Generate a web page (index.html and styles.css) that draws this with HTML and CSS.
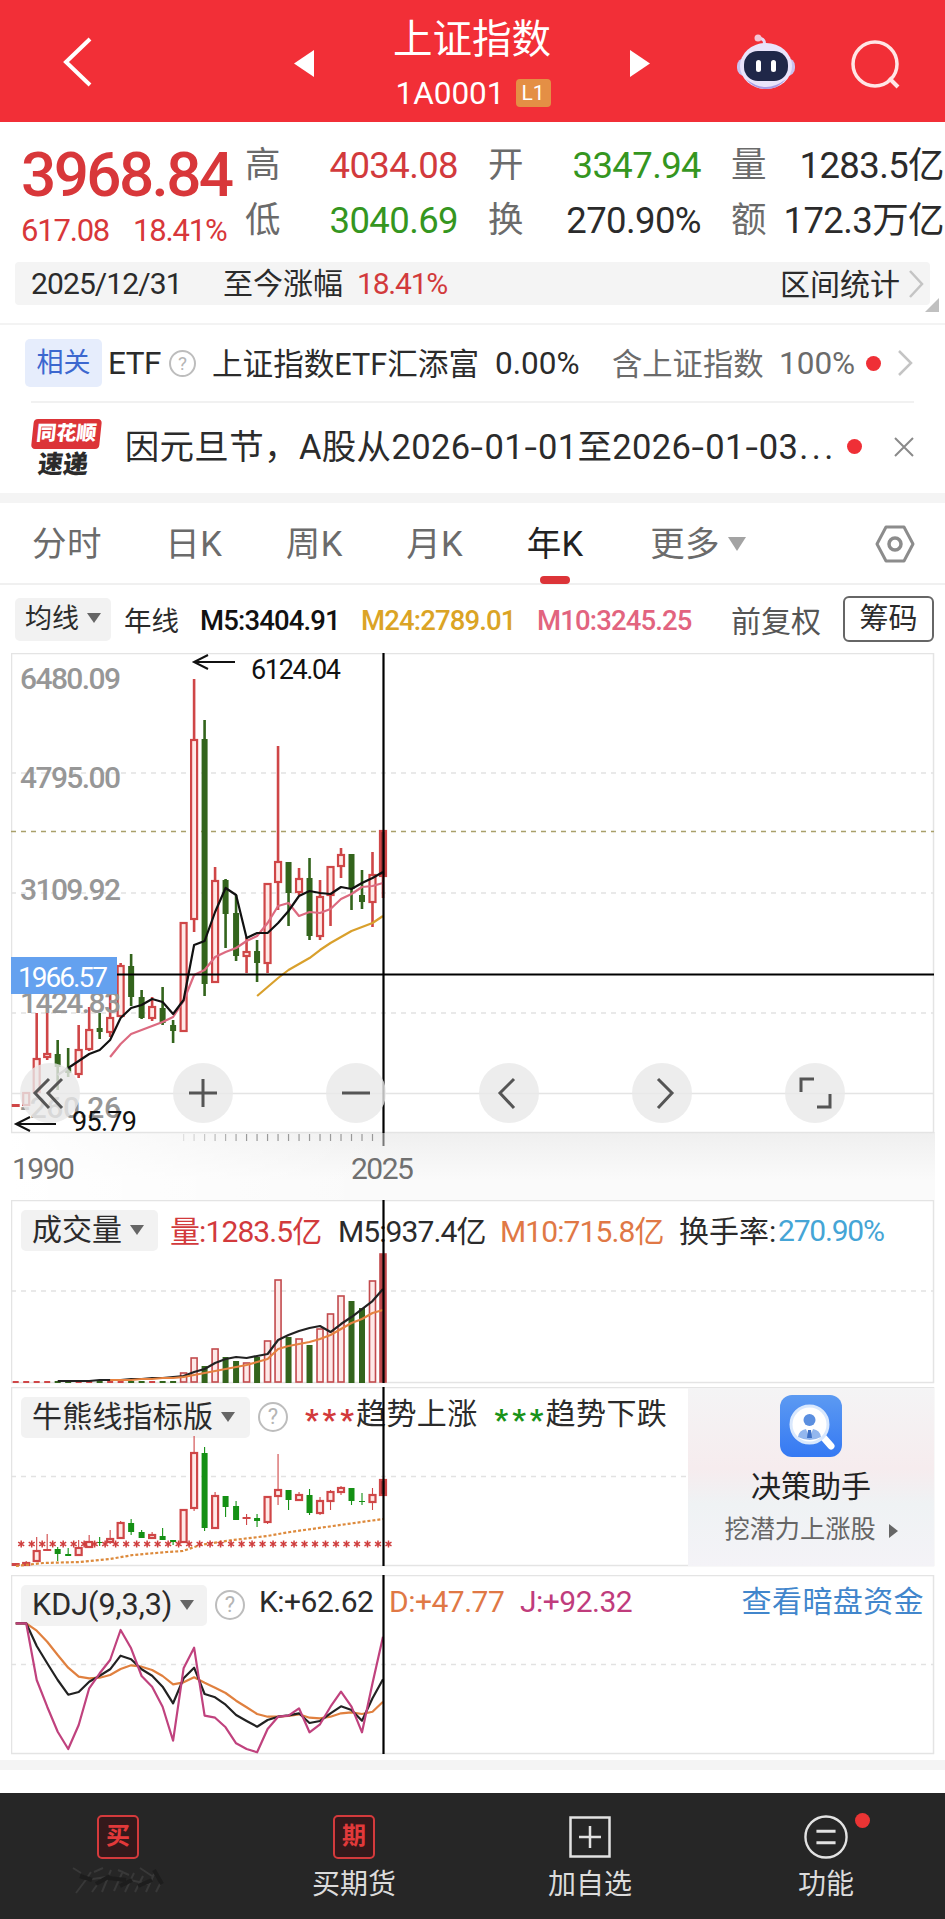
FILE: index.html
```html
<!DOCTYPE html>
<html lang="zh-CN">
<head>
  <meta charset="UTF-8">
  <meta name="viewport" content="width=device-width, initial-scale=1.0">
  <title>上证指数</title>
  <link rel="stylesheet" href="styles.css">
</head>
<body>
  <!-- Top bar -->
  <header class="topbar">
    <svg class="back" width="34" height="54" viewBox="0 0 34 54"><path d="M30 4 6 27 30 50" fill="none" stroke="#fff" stroke-width="4"/></svg>
    <svg class="prev" width="20" height="30" viewBox="0 0 20 30"><path d="M20 1v27L0 14.500z" fill="#fff"/></svg>
    <div class="title">
      <h1>上证指数</h1>
      <div class="code">1A0001<span class="level">L1</span></div>
    </div>
    <svg class="next" width="20" height="30" viewBox="0 0 20 30"><path d="M0 1v27l20-13.500z" fill="#fff"/></svg>
    <svg class="robot" width="60" height="56" viewBox="0 0 60 56">
      <path d="M28 12q2-7-5-8" fill="none" stroke="#e6d9f5" stroke-width="3"/>
      <circle cx="22" cy="4" r="3.500" fill="#f3c6d6"/>
      <rect x="1" y="24" width="58" height="18" rx="8" fill="#c9c3ef"/>
      <ellipse cx="30" cy="32" rx="26" ry="23" fill="#e9e4fb"/>
      <path d="M10 45q20 16 40 0-8 10-20 10T10 45z" fill="#a99be4"/>
      <rect x="8" y="17" width="44" height="30" rx="14" fill="#1f2748"/>
      <rect x="20" y="26" width="5" height="12" rx="2.500" fill="#fff"/>
      <rect x="35" y="26" width="5" height="12" rx="2.500" fill="#fff"/>
    </svg>
    <svg class="search" width="52" height="52" viewBox="0 0 52 52"><circle cx="25" cy="25" r="22" fill="none" stroke="#ffe6e6" stroke-width="3.500"/><path d="m39 39 9 9" stroke="#ffe6e6" stroke-width="4"/></svg>
  </header>

  <!-- Quote -->
  <section class="quote">
    <div class="price">
      <div class="last">3968.84</div>
      <div class="change"><span>617.08</span><span>18.41%</span></div>
    </div>
    <dl class="stats">
      <div><dt>高</dt><dd class="up">4034.08</dd></div>
      <div><dt>开</dt><dd class="down">3347.94</dd></div>
      <div><dt>量</dt><dd>1283.5亿</dd></div>
      <div><dt>低</dt><dd class="down">3040.69</dd></div>
      <div><dt>换</dt><dd>270.90%</dd></div>
      <div><dt>额</dt><dd>172.3万亿</dd></div>
    </dl>
  </section>
  <div class="range">
    <span class="date">2025/12/31</span>
    <span class="since">至今涨幅</span>
    <span class="up">18.41%</span>
    <span class="range-link">区间统计</span>
    <svg width="16" height="30" viewBox="0 0 16 30"><path d="m2 2 12 13L2 28" fill="none" stroke="#c4c4c4" stroke-width="2.500"/></svg>
    <i class="corner"></i>
  </div>

  <!-- Related ETF -->
  <section class="related">
    <span class="tag">相关</span>
    <span class="etf">ETF</span>
    <span class="help small">?</span>
    <span class="fund">上证指数ETF汇添富</span>
    <span class="fund-rate">0.00%</span>
    <span class="contain">含上证指数</span>
    <span class="contain-rate">100%</span>
    <i class="dot"></i>
    <svg width="16" height="28" viewBox="0 0 16 28"><path d="m2 2 12 12L2 26" fill="none" stroke="#c4c4c4" stroke-width="2.500"/></svg>
  </section>
  <section class="news">
    <div class="brand"><b>同花顺</b><em>速递</em></div>
    <p>因元旦节，A股从2026<s>-</s>01<s>-</s>01至2026<s>-</s>01<s>-</s>03<u>...</u></p>
    <i class="dot"></i>
    <svg width="20" height="20" viewBox="0 0 20 20"><path d="m1 1 18 18M19 1 1 19" stroke="#8a8a8a" stroke-width="2"/></svg>
  </section>

  <!-- Period tabs -->
  <nav class="tabs">
    <a>分时</a>
    <a>日K</a>
    <a>周K</a>
    <a>月K</a>
    <a class="active">年K</a>
    <a class="more">更多<i class="caret"></i></a>
    <svg width="40" height="38" viewBox="0 0 40 38"><path d="M11 2h18l9 17-9 17H11L2 19z" fill="none" stroke="#8c8c8c" stroke-width="3" stroke-linejoin="round"/><circle cx="20" cy="19" r="6" fill="none" stroke="#8c8c8c" stroke-width="3.500"/></svg>
  </nav>

  <div class="ma-row">
    <button class="pick">均线<i class="caret"></i></button>
    <span class="ma-name">年线</span>
    <span class="m5">M5:3404.91</span>
    <span class="m24">M24:2789.01</span>
    <span class="m10">M10:3245.25</span>
    <span class="fq">前复权</span>
    <button class="chips">筹码</button>
  </div>

  <!-- Candle chart -->
  <section class="panel main-panel">
    <svg id="mainChart" viewBox="11 653 924 494"></svg>
    <div class="tools">
      <button><svg viewBox="0 0 60 60"><path d="M29 16 15 30l14 15M42 16 28 30l14 15"/></svg></button>
      <button><svg viewBox="0 0 60 60"><path d="M16 30h28M30 16v28"/></svg></button>
      <button><svg viewBox="0 0 60 60"><path d="M16 30h28"/></svg></button>
      <button><svg viewBox="0 0 60 60"><path d="M35 16 21 30l14 15"/></svg></button>
      <button><svg viewBox="0 0 60 60"><path d="M26 16 40 30 26 45"/></svg></button>
      <button><svg viewBox="0 0 60 60"><path d="M16 29V16h13M45 31v13H32"/></svg></button>
    </div>
  </section>
  <div class="years"><span>1990</span><span>2025</span></div>

  <!-- Volume -->
  <section class="panel vol-panel">
    <div class="legend">
      <button class="pick">成交量<i class="caret"></i></button>
      <span class="up v1">量:1283.5亿</span>
      <span class="v2">M5:937.4亿</span>
      <span class="orange v3">M10:715.8亿</span>
      <span class="v4">换手率:</span>
      <span class="blue v5">270.90%</span>
    </div>
    <svg id="volChart" viewBox="11 1200 924 184"></svg>
  </section>

  <!-- Bull / bear line -->
  <section class="panel bull-panel">
    <div class="legend">
      <button class="pick">牛熊线指标版<i class="caret"></i></button>
      <span class="help">?</span>
      <span class="stars up">***</span>
      <span class="b1">趋势上涨</span>
      <span class="stars green">***</span>
      <span class="b2">趋势下跌</span>
    </div>
    <svg id="bullChart" viewBox="11 1387 924 180"></svg>
    <aside class="helper">
      <svg width="62" height="62" viewBox="0 0 62 62">
        <defs><linearGradient id="hg" x1="0" y1="0" x2="0" y2="1"><stop offset="0" stop-color="#5c9af2"/><stop offset="1" stop-color="#3579f3"/></linearGradient></defs>
        <rect width="62" height="62" rx="12" fill="url(#hg)"/>
        <path d="m44 43 7 8" stroke="#fff" stroke-width="7" stroke-linecap="round"/>
        <circle cx="29.500" cy="29.500" r="18.500" fill="#fff" stroke="#d9e8fd" stroke-width="3"/>
        <circle cx="29.500" cy="25" r="6" fill="#5b8fe0"/>
        <path d="M18 42q1-7 8-8l3.500 9 3.500-9q7 1 8 8-11 6-23 0z" fill="#93b7ee"/>
        <path d="M28 35h3l1 8h-5z" fill="#3d6fc4"/>
      </svg>
      <strong>决策助手</strong>
      <small>挖潜力上涨股<i></i></small>
    </aside>
  </section>

  <!-- KDJ -->
  <section class="panel kdj-panel">
    <div class="legend">
      <button class="pick">KDJ(9,3,3)<i class="caret"></i></button>
      <span class="help">?</span>
      <span class="k1">K:+62.62</span>
      <span class="orange k2">D:+47.77</span>
      <span class="magenta k3">J:+92.32</span>
      <a class="dark-pool">查看暗盘资金</a>
    </div>
    <svg id="kdjChart" viewBox="11 1575 924 180"></svg>
  </section>

  <!-- Bottom bar -->
  <footer class="bottom">
    <div class="item">
      <span class="box">买</span>
      <svg class="smudge" width="92" height="32" viewBox="0 0 92 32"><path d="M1 4 9 9M4 29l9-12 6-9M22 8l9-4M20 28l10-14M30 28l9-22M42 27l9-20M46 6l11 5M53 28l9-19M63 28l8-16M68 4l12 8M74 28l8-18M84 28l5-10M14 16l20-3M58 16l18 4"/><path class="dim" d="M8 12l12 4M24 20l14-8M36 14l18 2M48 22l12-6M66 22l14-6M82 6l8 14"/></svg>
    </div>
    <div class="item">
      <span class="box">期</span>
      <span>买期货</span>
    </div>
    <div class="item">
      <svg width="44" height="44" viewBox="0 0 44 44"><path d="M2.500 2.500h39v39h-39zM11 22h22M22 11v22" fill="none" stroke="#e2e2e2" stroke-width="2.500"/></svg>
      <span>加自选</span>
    </div>
    <div class="item">
      <svg width="46" height="46" viewBox="0 0 46 46"><path d="M13 17h20M13 29h20" stroke="#e2e2e2" stroke-width="3"/><circle cx="23" cy="23" r="21.500" fill="none" stroke="#e2e2e2" stroke-width="2.500"/></svg>
      <i class="badge"></i>
      <span>功能</span>
    </div>
  </footer>

  <script src="script.js"></script>
</body>
</html>
```

FILE: styles.css
```css
* {
  margin: 0;
  padding: 0;
  box-sizing: border-box;
}

body {
  width: 945px;
  height: 1919px;
  overflow: hidden;
  background: #fff;
  color: #2b2b2b;
  font-family: Roboto, "Noto Sans CJK SC", sans-serif;
  font-size: 30px;
  white-space: nowrap;
}

svg {
  display: block;
  flex: none;
}

i, em {
  font-style: normal;
}

button {
  border: none;
  color: inherit;
  font: inherit;
}

span, a, button {
  flex: none;
}

.up { color: #d23a3c; }
.down { color: #35961f; }
.green { color: #1a931a; }
.orange { color: #e07845; }
.blue { color: #45a5d6; }
.magenta { color: #c03c7c; }

/* Top bar */
.topbar {
  display: flex;
  align-items: center;
  height: 122px;
  background: #f22f37;
  color: #fff;
}

.back {
  margin-left: 60px;
  margin-top: 2px;
}

.prev {
  margin-left: 200px;
  margin-top: 6px;
}

.title {
  width: 316px;
  text-align: center;
}

.title h1 {
  height: 68px;
  line-height: 66px;
  margin-top: -4px;
  font-size: 39.500px;
  font-weight: 400;
}

.code {
  display: flex;
  justify-content: center;
  align-items: center;
  height: 36px;
  padding-left: 2px;
  font-size: 31.500px;
}

.level {
  width: 35px;
  height: 28px;
  margin-left: 11px;
  border-radius: 4px;
  background: #e48f45;
  font-size: 21px;
  line-height: 28px;
}

.next {
  margin-top: 6px;
}

.robot {
  margin-left: 86px;
  margin-top: 2px;
}

.search {
  margin-left: 54px;
  margin-top: 8px;
}

/* Quote */
.quote {
  display: flex;
  height: 140px;
  padding: 18px 2px 0 21px;
}

.price {
  width: 226px;
  color: #d8373a;
}

.last {
  height: 69px;
  font-size: 62px;
  font-weight: 500;
  line-height: 70px;
  letter-spacing: -2.600px;
}

.change {
  display: flex;
  gap: 24px;
  height: 44px;
  font-size: 31px;
  line-height: 43px;
  letter-spacing: -1.200px;
}

.stats {
  display: grid;
  grid-template-columns: repeat(3, 212px);
  grid-auto-rows: 55px;
  column-gap: 31px;
}

.stats div {
  display: flex;
  justify-content: space-between;
  line-height: 51px;
}

.stats dt {
  color: #6b6b6b;
  font-size: 35.500px;
}

.stats dd {
  font-size: 36.500px;
  letter-spacing: -0.600px;
  margin-right: -1px;
}

.range {
  position: relative;
  display: flex;
  align-items: center;
  width: 915px;
  height: 43px;
  margin-left: 15px;
  padding: 0 6px 0 16px;
  border-radius: 4px;
  background: #f4f4f4;
  line-height: 43px;
}

.date {
  width: 192px;
  letter-spacing: -0.900px;
}

.since {
  width: 134px;
}

.range .up {
  letter-spacing: -1.200px;
}

.range-link {
  margin-left: auto;
  margin-right: 8px;
  padding-top: 2px;
}

.corner {
  position: absolute;
  right: -9px;
  bottom: -7px;
  border: 7px solid #c0c0c0;
  border-top-color: transparent;
  border-left-color: transparent;
}

/* Related ETF */
.related {
  display: flex;
  align-items: center;
  height: 78px;
  margin-top: 18px;
  padding-left: 25px;
  border-top: 2px solid #f3f3f3;
}

.tag {
  width: 77px;
  height: 48px;
  border-radius: 5px;
  background: #e6edfc;
  color: #3c67cf;
  font-size: 27px;
  line-height: 48px;
  text-align: center;
}

.etf {
  width: 61px;
  padding-left: 6px;
  font-size: 31.500px;
  letter-spacing: -0.500px;
}

.help {
  width: 30px;
  height: 30px;
  border: 2.500px solid #bdbdbd;
  border-radius: 50%;
  color: #b5b5b5;
  font-size: 22px;
  line-height: 26px;
  text-align: center;
}

.help.small {
  width: 27px;
  height: 27px;
  margin-left: 6px;
  border-width: 2px;
  font-size: 19px;
  line-height: 23px;
}

.fund {
  width: 283px;
  margin-left: 16px;
  font-size: 30.600px;
}

.fund-rate {
  width: 117px;
  font-size: 31.500px;
}

.fund, .contain {
  margin-top: -3px;
}

.contain {
  width: 167px;
  color: #6b6b6b;
  font-size: 30.300px;
}

.contain-rate {
  width: 87px;
  color: #6b6b6b;
  font-size: 31.500px;
}

.dot {
  width: 15px;
  height: 15px;
  border-radius: 50%;
  background: #ef2f36;
}

.related svg {
  margin-left: 16px;
}

.news {
  display: flex;
  align-items: center;
  height: 92px;
  margin: 0 31px;
  border-top: 2px solid #f1f1f1;
}

.brand {
  display: flex;
  flex-direction: column;
  width: 94px;
  transform: skewX(-6deg);
}

.brand b {
  width: 68px;
  height: 30px;
  border-radius: 4px;
  background: #dc3438;
  color: #fff;
  font-size: 20px;
  font-weight: 900;
  line-height: 29px;
  text-align: center;
}

.brand em {
  width: 68px;
  height: 28px;
  font-size: 25px;
  font-weight: 900;
  line-height: 32px;
  text-align: center;
}

.news p {
  width: 725px;
  margin-top: -8px;
  font-size: 34.500px;
  letter-spacing: 0.350px;
}

.news s {
  display: inline-block;
  width: 14px;
  text-align: center;
  text-decoration: none;
  transform: scaleX(1.300);
}

.news u {
  margin-left: 1px;
  letter-spacing: 3.500px;
  text-decoration: none;
}

.news .dot {
  margin-top: -3px;
}

.news svg {
  margin-left: 32px;
  margin-top: -2px;
}

/* Period tabs */
.tabs {
  display: flex;
  align-items: center;
  height: 92px;
  padding: 0 30px 0 32px;
  border-top: 10px solid #f4f4f4;
  border-bottom: 2px solid #f0f0f0;
  color: #6b6b6b;
  font-size: 34.500px;
}

.tabs a {
  height: 80px;
  margin-right: 63.500px;
  line-height: 82px;
  letter-spacing: 0.400px;
}

.tabs .active {
  position: relative;
  color: #222;
}

.tabs .active::after {
  content: "";
  position: absolute;
  left: 13px;
  bottom: -1px;
  width: 30px;
  height: 8px;
  border-radius: 4px;
  background: #dc3438;
}

.tabs svg {
  margin-left: auto;
  margin-top: 2px;
}

.caret {
  display: inline-block;
  margin-left: 8px;
  border: 7.500px solid transparent;
  border-top: 10px solid #666;
  border-bottom: none;
  vertical-align: 5px;
}

.tabs .caret {
  border-width: 14px 9px 0;
  border-top-color: #a3a3a3;
}

.tabs .more {
  margin-left: 3px;
  margin-right: 0;
}

.ma-row {
  display: flex;
  align-items: center;
  height: 68px;
  padding-left: 15px;
  font-size: 27.500px;
}

.pick {
  border-radius: 5px;
  background: #f2f2f2;
}

.ma-row .pick {
  width: 96px;
  height: 43px;
  font-size: 27px;
  line-height: 36px;
  padding-bottom: 1px;
}

.ma-name {
  width: 76px;
  padding-left: 13px;
}

.m5, .m24, .m10 {
  margin-top: 3px;
  padding-left: 13px;
  font-weight: 500;
  letter-spacing: -0.850px;
}

.m5 { width: 161px; color: #111; }
.m24 { width: 176px; color: #dba425; }
.m10 { width: 194px; color: #e2647f; }

.fq {
  width: 125px;
  padding-left: 13px;
  color: #555;
  font-size: 30px;
}

.chips {
  width: 91px;
  height: 46px;
  border: 2px solid #666;
  border-radius: 6px;
  background: #fff;
  font-size: 29px;
  line-height: 38px;
  padding-bottom: 1px;
}

/* Chart panels */
.panel {
  position: relative;
  margin-left: 11px;
  width: 924px;
}

.panel > svg {
  position: absolute;
  top: 0;
  left: 0;
  width: 100%;
}

.main-panel {
  height: 479px;
  z-index: 1;
}

.tools {
  position: absolute;
  left: 9px;
  top: 410px;
  display: flex;
  gap: 93px;
}

.tools button {
  width: 60px;
  height: 60px;
  border-radius: 50%;
  background: rgba(232, 232, 232, 0.8);
}

.tools path {
  fill: none;
  stroke: #555;
  stroke-width: 3;
}

.years {
  display: flex;
  gap: 279px;
  height: 68px;
  margin: 0 10px 0 11px;
  padding-left: 1px;
  background: linear-gradient(90deg, #fff, rgba(255, 255, 255, 0) 40%), linear-gradient(#efefef, #fafafa 70%);
  color: #707070;
  line-height: 73px;
  letter-spacing: -1.500px;
}

.years span {
  width: 60px;
}

.legend {
  display: flex;
  align-items: center;
  height: 60px;
  padding-left: 10px;
}

.legend > span:not(.help) {
  letter-spacing: -0.900px;
}

.legend .pick {
  height: 41px;
  padding-left: 11px;
  padding-bottom: 1px;
  line-height: 36px;
  text-align: left;
}

.legend .help {
  margin-left: 8px;
}

.vol-panel { height: 187px; }
.vol-panel .pick { width: 137px; }
.vol-panel .legend > span { margin-top: -3px; }
.vol-panel .legend .v5 { margin-top: 0; letter-spacing: -1.200px; }
.v1 { width: 168px; margin-left: 12px; }
.v2 { width: 162px; }
.v3 { width: 179px; }
.vol-panel .legend .v4 { width: 99px; letter-spacing: 0; }

.bull-panel { height: 188px; }
.bull-panel .pick { width: 229px; letter-spacing: 0.200px; }

.bull-panel .legend .stars {
  width: 51px;
  height: 40px;
  margin-left: 17px;
  padding-top: 3px;
  font-size: 30px;
  font-weight: 700;
  line-height: 40px;
  letter-spacing: 4px;
}

.bull-panel .legend .b1,
.bull-panel .legend .b2 {
  margin-top: -13px;
  letter-spacing: 0.400px;
}

.helper {
  position: absolute;
  top: 1px;
  right: 1px;
  display: flex;
  flex-direction: column;
  align-items: center;
  width: 246px;
  height: 178px;
  padding-top: 7px;
  background: linear-gradient(#f4f4f5, #f6ecee 45%, #eff2f4 65%, #f4f3f7);
}

.helper strong {
  height: 57px;
  color: #222;
  font-weight: 400;
  line-height: 60px;
}

.helper small {
  color: #666;
  font-size: 25.200px;
  line-height: 32px;
}

.helper small i {
  display: inline-block;
  margin-left: 13px;
  border: 7px solid transparent;
  border-left: 9px solid #666;
  border-right: none;
}

.kdj-panel { height: 185px; }
.kdj-panel .pick { width: 186px; font-size: 30.500px; }
.kdj-panel .legend > span:not(.help) { letter-spacing: -0.500px; }
.k1 { width: 130px; margin-left: 14px; }
.k2 { width: 131px; }
.k1, .k2, .k3 { margin-top: -7px; }

.dark-pool {
  margin-left: auto;
  margin-right: 11px;
  margin-top: -12px;
  color: #4186cc;
  letter-spacing: 0.400px;
}

.grid { fill: none; stroke: #e4e4e4; stroke-width: 1.500; }
.dash { stroke: #e2e2e2; stroke-width: 1.500; stroke-dasharray: 5 5; }
.cross { stroke: #000; stroke-width: 2.200; }
.line { fill: none; stroke-width: 2.200; stroke-linejoin: round; }
.axis { fill: #979797; font-size: 30px; font-weight: 500; }
.mark { fill: #111; font-size: 27px; }

/* Bottom bar */
.bottom {
  display: grid;
  grid-template-columns: repeat(4, 236px);
  height: 159px;
  border-top: 10px solid #f4f4f4;
  background: linear-gradient(#fff 23px, #262626 23px);
  color: #dcdcdc;
  font-size: 28px;
}

.item {
  position: relative;
  display: flex;
  flex-direction: column;
  align-items: center;
  padding-top: 45px;
}

.item > svg:first-child,
.box {
  height: 44px;
}

.item > span:last-child {
  margin-top: 5px;
  line-height: 42px;
}

.box {
  width: 42px;
  border: 2.500px solid #d43a3c;
  border-radius: 5px;
  background: #34191b;
  color: #e3393a;
  font-size: 24px;
  font-weight: 700;
  line-height: 39px;
  text-align: center;
}

.smudge {
  margin-top: 5px;
  fill: none;
  stroke: #383838;
  stroke-width: 2;
}

.smudge .dim {
  stroke: #1d1d1d;
  stroke-width: 4;
}

.badge {
  position: absolute;
  left: 147px;
  top: 43px;
  width: 15px;
  height: 15px;
  border-radius: 50%;
  background: #ea3434;
}
```

FILE: script.js
```js
const RED = "#cf4647";
const GREEN = "#33641c";
const X0 = 15.7;
const STEP = 10.494;
const CROSS_X = 383.5;

const x = i => X0 + i * STEP;

// [up, high, bodyTop, bodyBottom, low] for each year since 1990
const candles = [
  [1, 1104, 1104, 1107, 1107], [1, 1092, 1092, 1106, 1106], [1, 1013, 1058, 1093, 1094],
  [1, 1013, 1053, 1058, 1060], [0, 1040, 1054, 1067, 1090], [0, 1048, 1068, 1073, 1077],
  [1, 1025, 1049, 1075, 1078], [1, 1007, 1029, 1050, 1051], [0, 1013, 1028, 1032, 1039],
  [1, 990, 1017, 1033, 1037], [1, 963, 965, 1017, 1017], [0, 954, 966, 997, 1006],
  [0, 990, 997, 1018, 1019], [1, 997, 1006, 1019, 1021], [0, 987, 1008, 1023, 1025],
  [0, 1020, 1025, 1031, 1043], [1, 922, 922, 1032, 1032], [1, 679, 739, 920, 932],
  [0, 720, 739, 984, 996], [1, 867, 880, 983, 983], [0, 879, 880, 914, 948],
  [0, 895, 913, 956, 961], [1, 937, 951, 957, 973], [0, 940, 951, 963, 982],
  [1, 883, 883, 964, 973], [1, 746, 861, 883, 910], [0, 862, 862, 893, 926],
  [1, 868, 878, 893, 895], [0, 858, 878, 936, 940], [1, 880, 896, 937, 940],
  [1, 866, 866, 896, 926], [1, 848, 854, 867, 878], [0, 854, 854, 889, 910],
  [0, 870, 895, 902, 909], [1, 852, 874, 903, 927], [1, 830, 830, 877, 898]
];

const bull = [
  [1, 1563, 1563, 1566, 1566], [1, 1561, 1562, 1566, 1566], [1, 1537, 1550, 1562, 1562],
  [1, 1534, 1549, 1551, 1551], [0, 1547, 1549, 1554, 1561], [0, 1548, 1554, 1556, 1556],
  [1, 1540, 1547, 1556, 1556], [1, 1535, 1541, 1548, 1548], [0, 1537, 1542, 1543, 1546],
  [1, 1530, 1538, 1543, 1544], [1, 1521, 1522, 1539, 1539], [0, 1519, 1523, 1532, 1535],
  [0, 1530, 1532, 1538, 1538], [1, 1532, 1534, 1539, 1539], [0, 1528, 1536, 1540, 1540],
  [0, 1540, 1540, 1542, 1545], [1, 1509, 1509, 1543, 1543], [1, 1436, 1452, 1509, 1511],
  [0, 1447, 1453, 1528, 1531], [1, 1492, 1495, 1529, 1529], [0, 1496, 1496, 1507, 1517],
  [0, 1501, 1506, 1520, 1520], [1, 1514, 1517, 1519, 1525], [0, 1514, 1518, 1521, 1527],
  [1, 1496, 1496, 1523, 1524], [1, 1454, 1489, 1497, 1505], [0, 1490, 1490, 1500, 1510],
  [1, 1492, 1494, 1501, 1501], [0, 1489, 1495, 1513, 1515], [1, 1497, 1500, 1514, 1515],
  [1, 1490, 1491, 1502, 1510], [1, 1486, 1487, 1493, 1495], [0, 1488, 1488, 1501, 1505],
  [0, 1493, 1501, 1502, 1505], [1, 1488, 1494, 1503, 1510], [1, 1479, 1479, 1496, 1496]
];

const ma5 = [1068, 1061, 1054, 1050, 1040, 1018, 1008, 1005, 999, 1002, 1014, 1000, 945, 941, 912, 888, 895, 938, 933, 933, 923, 911, 896, 891, 893, 894, 887, 889, 883, 878, 872];
const ma10 = [1057, 1044, 1034, 1030, 1026, 1022, 1017, 1001, 975, 970, 957, 952, 948, 941, 936, 923, 906, 903, 916, 912, 913, 909, 899, 894, 887, 886, 883];
const ma24 = [996, 987, 978, 970, 964, 958, 950, 943, 937, 931, 927, 923, 916];

const volTop = [1372, 1357, 1366, 1348, 1357, 1361, 1362, 1357, 1340, 1279, 1337, 1338, 1345, 1328, 1313, 1295, 1301, 1308, 1280, 1253];
const vol5 = [1381, 1381, 1381, 1381, 1380, 1380, 1380, 1379, 1379, 1378, 1378, 1377, 1376, 1372, 1369, 1363, 1359, 1357, 1358, 1356, 1354, 1340, 1335, 1331, 1328, 1326, 1332, 1324, 1317, 1309, 1301, 1289];
const vol10 = [1380, 1380, 1380, 1379, 1379, 1378, 1378, 1377, 1375, 1373, 1371, 1369, 1367, 1365, 1362, 1359, 1349, 1346, 1344, 1342, 1339, 1335, 1329, 1323, 1319, 1313, 1310];

// offsets from the top of the KDJ panel, in thirds of a pixel
const J = [160, 160, 330, 410, 485, 537, 465, 355, 310, 270, 180, 235, 318, 350, 410, 512, 295, 233, 437, 443, 472, 520, 537, 547, 477, 440, 437, 415, 487, 463, 410, 365, 410, 487, 340, 200];
const K = [160, 160, 228, 280, 330, 374, 366, 335, 317, 298, 257, 268, 298, 317, 350, 400, 325, 293, 372, 382, 404, 435, 453, 470, 450, 440, 436, 430, 459, 453, 430, 409, 420, 452, 385, 328];
const D = [160, 160, 182, 215, 255, 293, 320, 325, 323, 315, 297, 286, 290, 300, 318, 343, 337, 322, 338, 353, 369, 392, 412, 432, 440, 440, 438, 433, 443, 445, 440, 430, 427, 432, 425, 395];

function frame(top, bottom) {
  return `<rect class="grid" x="11.500" y="${top + 0.5}" width="922" height="${bottom - top - 1}"/>`;
}

function hline(y, cls, from = 11) {
  return `<line class="${cls}" x1="${from}" x2="934" y1="${y}" y2="${y}"/>`;
}

function cross(top, bottom) {
  return `<line class="cross" x1="${CROSS_X}" x2="${CROSS_X}" y1="${top}" y2="${bottom}"/>`;
}

function line(values, start, color, extra = "") {
  const pts = values.map((v, i) => `${x(start + i).toFixed(1)},${v}`).join(" ");
  return `<polyline class="line" points="${pts}" stroke="${color}" ${extra}/>`;
}

function drawCandles(data, wick, green) {
  return data.map(([up, high, top, bottom, low], i) => {
    const cx = x(i);
    const color = up ? RED : green;
    const last = i === data.length - 1;
    const h = Math.max(bottom - top, 1);
    let out = `<path d="M${cx} ${high}V${top}M${cx} ${bottom}V${low}" stroke="${color}" stroke-width="${wick}"/>`;
    if (up && h > 3) {
      out += `<rect x="${cx - 3}" y="${top + 1}" width="6" height="${h - 2}" fill="${last ? "#a03538" : "#ffe9e7"}" stroke="${color}" stroke-width="2.200"/>`;
    } else {
      out += `<rect x="${cx - (up ? 4 : 3)}" y="${top}" width="${up ? 8 : 6}" height="${h}" fill="${color}"/>`;
    }
    return out;
  }).join("");
}

function drawMain() {
  let s = frame(653, 1133);
  [773, 893, 1013].forEach(y => s += hline(y, "dash"));
  s += hline(1093.5, "grid");
  s += `<line x1="11" x2="934" y1="831.500" y2="831.500" stroke="#a9a06a" stroke-width="1.500" stroke-dasharray="5 5"/>`;
  s += drawCandles(candles, 2.6, GREEN);
  s += line(ma24, 23, "#d9a02c");
  s += line(ma10, 9, "#dc6a80");
  s += line([1075, 1068], 4, "#999");
  s += line(ma5, 5, "#111");
  [["6480.09", 689], ["4795.00", 788], ["3109.92", 900], ["1424.83", 1013], ["-260.26", 1118]].forEach(([t, y]) => {
    s += `<text class="axis" x="20" y="${y}" textLength="101">${t}</text>`;
  });
  s += `<path d="M235 662h-40M208 655l-14 7 14 7M56 1124H17M30 1117l-14 7 14 7" fill="none" stroke="#111" stroke-width="2"/>`;
  s += `<text class="mark" x="251" y="679" textLength="90">6124.04</text>`;
  s += `<text class="mark" x="72" y="1131" textLength="65">95.79</text>`;
  s += hline(974.5, "cross", 117);
  s += cross(653, 1133);
  s += `<rect x="11" y="957" width="106" height="37" fill="#64a1ef"/>`;
  s += `<text x="18" y="987" font-size="28" fill="#fff" textLength="90">1966.57</text>`;
  for (let i = 16; i < 35; i++) {
    s += `<path d="M${x(i)} 1134v7" stroke="#999" stroke-opacity="${Math.min(1, (i - 14) / 8)}" stroke-width="1.200"/>`;
  }
  s += `<path d="M${CROSS_X} 1133v13" stroke="#777" stroke-width="2"/>`;
  document.getElementById("mainChart").innerHTML = s;
}

function drawVolume() {
  let s = frame(1200, 1383) + hline(1291, "dash");
  for (let i = 0; i < 16; i++) {
    s += `<rect x="${x(i) - 3}" y="1381" width="6" height="2" fill="${candles[i][0] ? RED : GREEN}"/>`;
  }
  volTop.forEach((top, n) => {
    const i = n + 16;
    const cx = x(i);
    if (candles[i][0]) {
      const fill = i === 35 ? "#b5474a" : "#fde9e8";
      s += `<rect x="${cx - 3}" y="${top + 1}" width="6" height="${1381 - top}" fill="${fill}" stroke="#c24a4d" stroke-width="1.600"/>`;
    } else {
      s += `<rect x="${cx - 3}" y="${top}" width="6" height="${1383 - top}" fill="${GREEN}"/>`;
    }
  });
  s += line(vol5, 4, "#222") + line(vol10, 9, "#e58240");
  document.getElementById("volChart").innerHTML = s + cross(1200, 1383);
}

function drawBull() {
  let s = frame(1387, 1566) + hline(1476.5, "dash");
  s += drawCandles(bull, 1.1, "#149014");
  s += `<polyline class="line" points="16,1566 43,1563 80,1562 110,1559 133,1555 167,1552 183,1551 200,1545 233,1540 267,1536 290,1532 333,1526 383,1519" stroke="#dd8a3c" stroke-dasharray="3 2"/>`;
  for (let i = 0; i < 36; i++) {
    const cx = 21.2 + i * STEP;
    s += `<path d="M${cx} 1540.500v7M${cx - 3} 1542.200l6 3.600M${cx + 3} 1542.200l-6 3.600" stroke="#cf3c3c" stroke-width="1.500"/>`;
  }
  document.getElementById("bullChart").innerHTML = s + cross(1387, 1566);
}

function drawKdj() {
  const y = v => (1570 + v / 3).toFixed(1);
  let s = frame(1575, 1754) + hline(1664.5, "dash");
  s += line(D.map(y), 0, "#e0803f") + line(K.map(y), 0, "#222") + line(J.map(y), 0, "#c0427e");
  document.getElementById("kdjChart").innerHTML = s + cross(1575, 1754);
}

drawMain();
drawVolume();
drawBull();
drawKdj();
```
